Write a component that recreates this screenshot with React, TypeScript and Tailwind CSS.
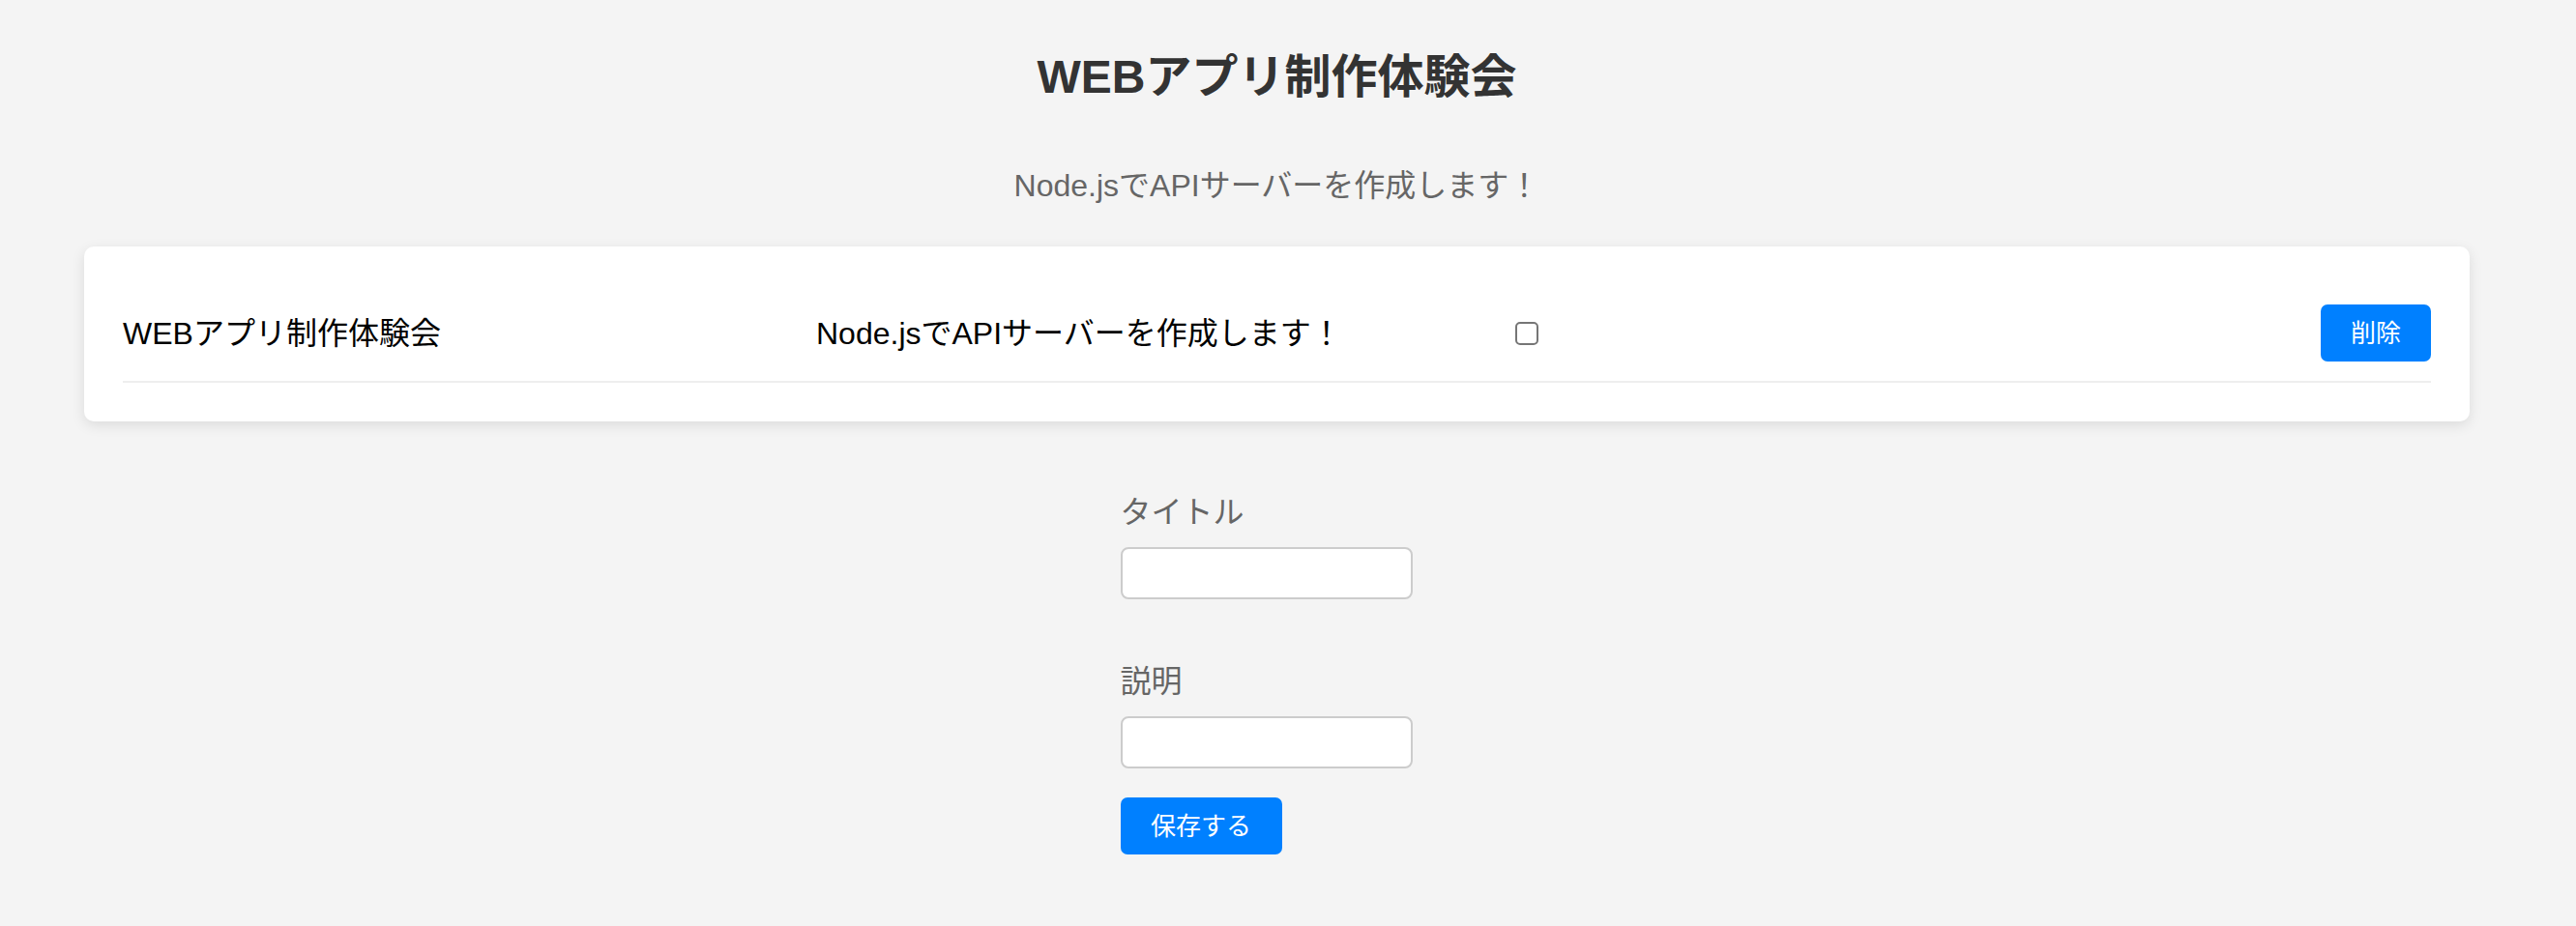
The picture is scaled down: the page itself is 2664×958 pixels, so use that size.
const FONT = "font-['Liberation_Sans','Noto_Sans_CJK_JP',sans-serif]";

type Item = { title: string; body: string; done: boolean };

const items: Item[] = [
  { title: "WEBアプリ制作体験会", body: "Node.jsでAPIサーバーを作成します！", done: false },
];

// One row of the list: title, body, done checkbox, delete button on the right.
function ItemRow({ item }: { item: Item }) {
  return (
    <div className="grid grid-cols-[717px_723px_1fr_auto] items-center border-b-2 border-[#eeeeee] py-[20px]">
      <span className="text-[32px] leading-[32px] text-black">{item.title}</span>
      <span className="text-[32px] leading-[32px] text-black">{item.body}</span>
      <span className="flex">
        <span className="h-[24px] w-[24px] rounded-[5px] border-2 border-[#767676] bg-white" />
      </span>
      <button
        type="button"
        className="h-[59px] w-[114px] rounded-[7px] bg-[#0080ff] text-[26px] leading-none text-white"
      >
        削除
      </button>
    </div>
  );
}

function Field({ label }: { label: string }) {
  return (
    <div className="flex flex-col">
      <label className="text-[32px] leading-[32px] text-[#666666]">{label}</label>
      <input
        type="text"
        className="mt-[20px] h-[54px] w-[302px] rounded-[8px] border-2 border-[#cccccc] bg-white px-3 outline-none"
      />
    </div>
  );
}

export default function App() {
  return (
    <div className={`min-h-screen bg-[#f4f4f4] ${FONT}`}>
      {/* content column is a bit narrower than the window, like the original page */}
      <div className="flex w-[2641px] flex-col pb-[60px]">
        <h1 className="mt-[56px] text-center text-[48px] font-bold leading-[48px] text-[#333333]">
          WEBアプリ制作体験会
        </h1>
        <p className="mt-[72px] text-center text-[32px] leading-[32px] text-[#666666]">
          Node.jsでAPIサーバーを作成します！
        </p>

        <div className="mx-[87px] mt-[47px] rounded-[10px] bg-white p-[40px] shadow-[0_4px_14px_rgba(0,0,0,0.1)]">
          {items.map((item) => (
            <ItemRow key={item.title} item={item} />
          ))}
        </div>

        <form className="mx-auto mt-[78px] flex w-[324px] flex-col">
          <Field label="タイトル" />
          <div className="mt-[69px]">
            <Field label="説明" />
          </div>
          <button
            type="button"
            className="mt-[30px] h-[59px] w-[167px] rounded-[7px] bg-[#0080ff] text-[26px] leading-none text-white"
          >
            保存する
          </button>
        </form>
      </div>
    </div>
  );
}
